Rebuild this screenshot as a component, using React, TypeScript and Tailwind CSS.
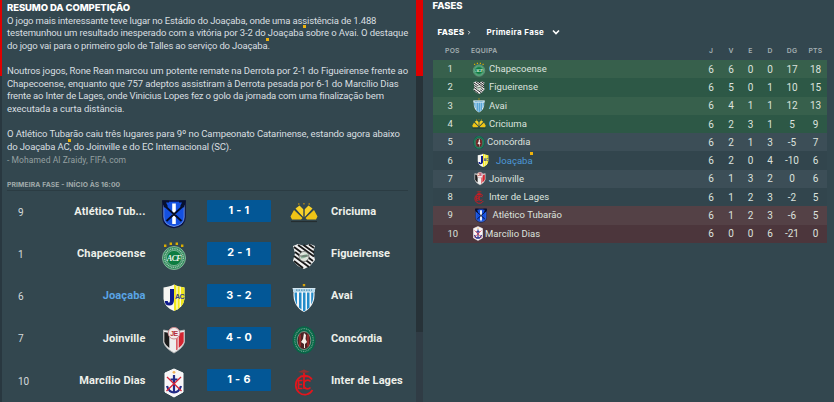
import type { ReactNode } from 'react';
import clsx from 'clsx';

type TeamId =
  | 'tubarao'
  | 'chapecoense'
  | 'joacaba'
  | 'joinville'
  | 'marcilio'
  | 'criciuma'
  | 'figueirense'
  | 'avai'
  | 'concordia'
  | 'inter';

const crests: Record<TeamId, ReactNode> = {
  tubarao: (
    <>
      <path d="M3 2h22v16q0 9-11 10.500Q3 27 3 18z" fill="#1450e0" stroke="#0a1245" strokeWidth="1.600" />
      <path d="M3.800 6v12q0 8 10.200 9.500Q24.200 26 24.200 18V6" fill="none" stroke="#8aaeef" strokeWidth="0.700" />
      <path d="M12.200 4.500h3.600V25h-3.600z" fill="#fff" />
      <path d="M5.500 7.500l16 14.500M22.500 7.500L6.500 22" stroke="#050b25" strokeWidth="1.800" />
      <path d="M2 1.500h7v2H6l2 4-4 1zM26 1.500h-7v2h3l-2 4 4 1z" fill="#07102f" />
    </>
  ),
  chapecoense: (
    <>
      <circle cx="14" cy="17" r="11.500" fill="#2f8a5b" stroke="#8dbba2" strokeWidth="0.900" />
      <circle cx="14" cy="17" r="9.300" fill="none" stroke="#a3c9b4" strokeWidth="1.500" strokeDasharray="1 0.800" />
      <circle cx="14" cy="17" r="7.600" fill="#0c7c40" stroke="#c3dccd" strokeWidth="0.500" />
      <text
        x="14"
        y="20"
        textAnchor="middle"
        fontSize="7.800"
        fontWeight="700"
        fontStyle="italic"
        letterSpacing="-0.600"
        fill="#f1f8f3"
        className="font-['Liberation_Serif',serif]"
      >
        ACF
      </text>
      <path d="M4 3.500h2.400v2.400H4zM9.600 1.500H12v2.400H9.600zM15.600 1.500H18v2.400h-2.400zM21 3.500h2.400v2.400H21z" fill="#dcae00" />
    </>
  ),
  joacaba: (
    <>
      <path d="M3.500 4.500q3-.5 5-1 3-.5 5.500-2 2.500 1.500 5.500 2 2 .5 5 1V16q-1 8.500-10.500 12Q4.500 24.500 3.500 16z" fill="#f6f6f2" />
      <path d="M14 1.500q2.500 1.500 5.500 2 2 .5 5 1V16q-1 8.500-10.500 12z" fill="#f0e61c" />
      <path d="M17 3v23.500M20.300 4v20" stroke="#fbfad8" strokeWidth="1.300" />
      <path d="M10 6h4v11q0 5.500-4.800 5.500-4.200 0-4.400-4.500h3q0 1.800 1.200 1.800 1 0 1-2.800z" fill="#0d1a8c" />
      <text
        x="19.500"
        y="16"
        textAnchor="middle"
        fontSize="7"
        fontWeight="700"
        letterSpacing="-0.500"
        fill="#33408f"
        className="font-['Liberation_Sans',sans-serif]"
      >
        AC
      </text>
    </>
  ),
  joinville: (
    <>
      <path d="M3.500 5l5 1 5.500-2 5.500 2 5-1v12q-1.500 6-10.500 11Q5 23 3.500 17z" fill="#eee" stroke="#b9b9b9" strokeWidth="0.900" />
      <path d="M4.300 7l5 1v15q-4-3-5-6z" fill="#1c1c1c" />
      <path d="M23.700 7l-5 1v15q4-3 5-6zM16.300 13h1.200v11.500l-1.200.8z" fill="#d32430" />
      <circle cx="14" cy="8.200" r="5.800" fill="#f3eaea" stroke="#c98a8e" strokeWidth="1" />
      <text
        x="14"
        y="10.800"
        textAnchor="middle"
        fontSize="7"
        fontWeight="700"
        letterSpacing="-0.500"
        fill="#b4303a"
        className="font-['Liberation_Sans',sans-serif]"
      >
        JE
      </text>
    </>
  ),
  marcilio: (
    <>
      <path d="M14 1l9 4v19l-9 5-9-5V5z" fill="#f7f5f7" stroke="#fff" strokeWidth="1" />
      <circle cx="14" cy="4.300" r="1.400" fill="#f2b45a" />
      <path d="M14 7v18M10.500 11.500h7M7 18q2 6.500 7 6.500t7-6.500" fill="none" stroke="#222b87" strokeWidth="2.200" />
      <path d="M7 9l14.500 14M21 9L6.500 23" stroke="#d62538" strokeWidth="1.300" />
    </>
  ),
  criciuma: (
    <>
      <path d="M.5 17.500L4 11l8.500 8-1.500 1.500H2zM27.500 17.500L24 11l-8.500 8 1.500 1.500h9z" fill="#f0c416" />
      <path d="M5.500 9.500l4-3 4 4v8zM22.500 9.500l-4-3-4 4v8z" fill="#f8d22a" />
      <path d="M4.500 10l9 9M23.500 10l-9 9M14 10v10" stroke="#33474f" strokeWidth="0.900" />
      <path d="M8 4.200h1.500v1.500H8zM13.200 4h1.500v1.500h-1.500zM18.500 4.200H20v1.500h-1.500z" fill="#a8841e" />
      <path d="M1 22.500h26" stroke="#242d30" strokeWidth="1.200" />
    </>
  ),
  figueirense: (
    <>
      <path d="M3 5l5-2 6 2 6-2 5 2-2 6 2 8-5 6-6 3-6-3-5-5 2-8z" fill="#f1f1f1" />
      <path
        d="M4 6l19 14M8 4l16 11.500M13.500 4L24 11.500M19 3.500l5 3.500M5 11l16 12M4 15l15 11M4 20l9 7"
        stroke="#191919"
        strokeWidth="1.900"
      />
      <circle cx="14" cy="15.500" r="5" fill="#dfe5dd" stroke="#555" strokeWidth="0.700" />
      <path d="M10 17.500q3-5 8-4-1 4-8 4z" fill="#8db39a" />
      <path d="M9.500 15h9" stroke="#454545" strokeWidth="0.800" />
    </>
  ),
  avai: (
    <>
      <path d="M2.500 5h23l-1 4q1 14-10.500 20Q2.500 23 3.500 9z" fill="#f3f7fa" />
      <path d="M3 5.500h22v3.500H3z" fill="#b7d9eb" />
      <path
        d="M4.500 9.500H7V22q-2.500-4-2.500-12.500zM9 9.500h2.500v17L9 24.500zM13 9.500h2.500v18L14 28.300l-1-.5zM17 9.500h2.500v15L17 26.500zM21.200 9.500h2.300q0 8-2.300 12z"
        fill="#248bc9"
      />
      <path d="M6 7.200h16" stroke="#4e91b5" strokeWidth="1.300" strokeDasharray="1.500 1" />
      <path d="M12.800 1h2.400v2.200h-2.400z" fill="#d6a20a" />
    </>
  ),
  concordia: (
    <>
      <ellipse cx="14" cy="15" rx="11.500" ry="13.700" fill="#086647" />
      <ellipse cx="14" cy="15" rx="9.200" ry="11.400" fill="none" stroke="#6fa68f" strokeWidth="1.200" strokeDasharray="1 0.800" />
      <ellipse cx="14" cy="15.500" rx="6.800" ry="9" fill="#4b2425" stroke="#bac3ba" strokeWidth="0.600" />
      <path d="M10 9.500v12M18 9.500v12" stroke="#a32d2d" strokeWidth="1.600" />
      <path d="M14 8l2 2-.5 4 1.500 3-2 2v4h-1v-4l-3-2 2-3z" fill="#f5f0e9" />
    </>
  ),
  inter: (
    <>
      <g fill="none" stroke="#e3151c" strokeWidth="1.700">
        <path d="M22 11.500A9 9.500 0 1 0 22.500 22" />
        <path d="M20.500 13.500a4 4.300 0 1 0 0 6" />
        <path d="M14 5v16M10 8.500h8M12.500 12.500H8.500v8h4M8.500 16.500h3.500" />
      </g>
      <path d="M8 4l6-2.500L20 4l-6 1z" fill="#8f302f" />
    </>
  ),
};

function Crest({ team, className }: { team: TeamId; className: string }) {
  return (
    <svg viewBox="0 0 28 30" className={clsx('shrink-0', className)}>
      {crests[team]}
    </svg>
  );
}

const report = [
  {
    text: 'O jogo mais interessante teve lugar no Estádio do Joaçaba, onde uma assistência de 1.488',
    tracking: 'tracking-[-0.16px]',
  },
  {
    text: 'testemunhou um resultado inesperado com a vitória por 3-2 do Joaçaba sobre o Avai. O destaque',
    tracking: 'tracking-[-0.11px]',
  },
  { text: 'do jogo vai para o primeiro golo de Talles ao serviço do Joaçaba.', tracking: 'tracking-[-0.16px]' },
  { text: '', tracking: '' },
  {
    text: 'Noutros jogos, Rone Rean marcou um potente remate na Derrota por 2-1 do Figueirense frente ao',
    tracking: 'tracking-[-0.09px]',
  },
  {
    text: 'Chapecoense, enquanto que 757 adeptos assistiram à Derrota pesada por 6-1 do Marcílio Dias',
    tracking: 'tracking-[-0.07px]',
  },
  {
    text: 'frente ao Inter de Lages, onde Vinicius Lopes fez o golo da jornada com uma finalização bem',
    tracking: 'tracking-[-0.165px]',
  },
  { text: 'executada a curta distância.', tracking: 'tracking-[-0.05px]' },
  { text: '', tracking: '' },
  {
    text: 'O Atlético Tubarão caiu três lugares para 9º no Campeonato Catarinense, estando agora abaixo',
    tracking: 'tracking-[-0.09px]',
  },
  { text: 'do Joaçaba AC, do Joinville e do EC Internacional (SC).', tracking: 'tracking-[-0.13px]' },
];

type Match = { pos: number; home: string; homeId: TeamId; score: string; away: string; awayId: TeamId };

const matches: Match[] = [
  { pos: 9, home: 'Atlético Tub...', homeId: 'tubarao', score: '1 - 1', away: 'Criciuma', awayId: 'criciuma' },
  { pos: 1, home: 'Chapecoense', homeId: 'chapecoense', score: '2 - 1', away: 'Figueirense', awayId: 'figueirense' },
  { pos: 6, home: 'Joaçaba', homeId: 'joacaba', score: '3 - 2', away: 'Avai', awayId: 'avai' },
  { pos: 7, home: 'Joinville', homeId: 'joinville', score: '4 - 0', away: 'Concórdia', awayId: 'concordia' },
  { pos: 10, home: 'Marcílio Dias', homeId: 'marcilio', score: '1 - 6', away: 'Inter de Lages', awayId: 'inter' },
];

type Row = { team: string; id: TeamId; stats: number[]; bg: string; crest: string; gap: string };

const standings: Row[] = [
  { team: 'Chapecoense', id: 'chapecoense', stats: [6, 6, 0, 0, 17, 18], bg: 'bg-[#37604c]', crest: 'ml-[39.5px]', gap: 'ml-[3px]' },
  { team: 'Figueirense', id: 'figueirense', stats: [6, 5, 0, 1, 10, 15], bg: 'bg-[#2d5846]', crest: 'ml-[39.5px]', gap: 'ml-[3px]' },
  { team: 'Avai', id: 'avai', stats: [6, 4, 1, 1, 12, 13], bg: 'bg-[#37604c]', crest: 'ml-[39.5px]', gap: 'ml-[3px]' },
  { team: 'Criciuma', id: 'criciuma', stats: [6, 2, 3, 1, 5, 9], bg: 'bg-[#2d5846]', crest: 'ml-[39.5px]', gap: 'ml-[3px]' },
  { team: 'Concórdia', id: 'concordia', stats: [6, 2, 1, 3, -5, 7], bg: 'bg-[#3c4e57]', crest: 'ml-[39px]', gap: 'ml-[1.5px]' },
  { team: 'Joaçaba', id: 'joacaba', stats: [6, 2, 0, 4, -10, 6], bg: 'bg-[#32454d]', crest: 'ml-[43px]', gap: 'ml-[6.5px]' },
  { team: 'Joinville', id: 'joinville', stats: [6, 1, 3, 2, 0, 6], bg: 'bg-[#3c4e57]', crest: 'ml-[40px]', gap: 'ml-[2.5px]' },
  { team: 'Inter de Lages', id: 'inter', stats: [6, 1, 2, 3, -2, 5], bg: 'bg-[#32454d]', crest: 'ml-[39.5px]', gap: 'ml-[3px]' },
  { team: 'Atlético Tubarão', id: 'tubarao', stats: [6, 1, 2, 3, -6, 5], bg: 'bg-[#544146]', crest: 'ml-[41px]', gap: 'ml-[5px]' },
  { team: 'Marcílio Dias', id: 'marcilio', stats: [6, 0, 0, 6, -21, 0], bg: 'bg-[#4c363c]', crest: 'ml-[38px]', gap: 'ml-[0.5px]' },
];

function NewsDot({ className }: { className: string }) {
  return <span className={clsx('absolute size-[3px] bg-[#efb20b]', className)} />;
}

function MatchRow({ match }: { match: Match }) {
  return (
    <div className="flex h-[42.3px] items-center">
      <span className="w-[36px] shrink-0 pl-[11px] text-[10px] text-[#d5dbdc]">{match.pos}</span>
      <span
        className={clsx(
          'w-[102.5px] shrink-0 whitespace-nowrap text-right text-[11px] font-bold tracking-[0.13px]',
          match.homeId === 'joacaba' ? 'text-[#5aa5e6]' : 'text-[#eef0ea]',
        )}
      >
        {match.home}
      </span>
      <Crest team={match.homeId} className="ml-[14px] mt-[3px] h-[30px] w-[28px]" />
      <div className="mb-[2px] ml-[19.5px] flex h-[22.5px] w-[64px] shrink-0 items-center justify-center rounded-[1px] bg-[#035796] font-['Inter',sans-serif] text-[10.8px] font-bold tracking-[0.35px] text-white">
        {match.score}
      </div>
      <Crest team={match.awayId} className="ml-[19px] mt-[3px] h-[30px] w-[28px]" />
      <span className="ml-[13px] whitespace-nowrap text-[11px] font-bold tracking-[0.1px] text-[#eef0ea]">
        {match.away}
      </span>
    </div>
  );
}

function Summary() {
  return (
    <section className="relative h-full w-[414px] shrink-0 pl-[5.5px]">
      <h2 className="h-[14px] pt-[2px] font-['Inter',sans-serif] text-[9.5px] leading-[12px] font-extrabold tracking-[-0.1px] text-white">
        RESUMO DA COMPETIÇÃO
      </h2>
      <div className="pt-[0.5px] text-[9.5px] leading-[12.67px] text-[#d9dfe0]">
        {report.map((line, i) => (
          <p key={i} className="h-[12.67px] whitespace-nowrap">
            <span className={line.tracking}>{line.text}</span>
          </p>
        ))}
        <p className="text-[8.5px] tracking-[0.08px] text-[#95a0a1]">- Mohamed Al Zraidy, FIFA.com</p>
      </div>
      <NewsDot className="top-[25px] left-[301px]" />
      <NewsDot className="top-[38px] left-[264.5px]" />
      <NewsDot className="top-[139px] left-[66.5px]" />
      <h3 className="mt-[13.5px] mr-[8px] h-[11px] border-b border-[#2b3c43] pt-[0.5px] font-['Inter',sans-serif] text-[6.8px] leading-[10px] font-bold tracking-[0.1px] text-[#a1abab]">
        PRIMEIRA FASE - INÍCIO ÀS 16:00
      </h3>
      {matches.map((match) => (
        <MatchRow key={match.pos} match={match} />
      ))}
    </section>
  );
}

const columnWidths = ['w-[20px]', 'w-[20px]', 'w-[19px]', 'w-[20px]', 'w-[24px]', 'w-[23px]'];
const columnNames = ['J', 'V', 'E', 'D', 'DG', 'PTS'];

function Standings() {
  return (
    <section className="grow pr-[7px] pl-[10px]">
      <h2 className="h-[22px] font-['Inter',sans-serif] text-[9.5px] leading-[11px] font-extrabold tracking-[0px] text-white">
        FASES
      </h2>
      <div className="flex h-[20px] items-center pl-[5px] font-['Inter',sans-serif] text-[8px] font-bold text-white">
        <span className="w-[27px] font-extrabold tracking-[0.3px]">FASES</span>
        <svg viewBox="0 0 4 6" className="ml-[2px] h-[5px] w-[4px]" fill="none" stroke="#fff">
          <path d="M1 1l2 2-2 2" />
        </svg>
        <span className="ml-[16px] w-[58px] whitespace-nowrap tracking-[0.35px]">Primeira Fase</span>
        <svg viewBox="0 0 8 6" className="ml-[7.5px] h-[6px] w-[8px]" fill="none" stroke="#fff" strokeWidth="1.6">
          <path d="M1 1.500l3 3 3-3" />
        </svg>
      </div>
      <div className="flex h-[18px] items-center pt-[1px] font-['Inter',sans-serif] text-[6.8px] font-semibold tracking-[0.25px] text-[#a4afb2]">
        <span className="w-[38.5px] pl-[12.5px]">POS</span>
        <span className="grow">EQUIPA</span>
        {columnNames.map((name, i) => (
          <span key={name} className={clsx('shrink-0 text-center', columnWidths[i])}>
            {name}
          </span>
        ))}
      </div>
      {standings.map((row, i) => (
        <div key={row.id} className={clsx('relative flex h-[18.3px] items-center text-[9.5px] text-[#dce2de]', row.bg)}>
          <span className="-mr-[34px] w-[34px] shrink-0 pl-[15px]">{i + 1}</span>
          <Crest team={row.id} className={clsx('h-[17px] w-[14px]', row.crest)} />
          <span
            className={clsx(
              'grow whitespace-nowrap tracking-[0.02px]',
              row.gap,
              row.id === 'joacaba' && 'text-[#4c98d8]',
            )}
          >
            {row.team}
          </span>
          {row.id === 'joacaba' && <NewsDot className="top-[1px] left-[97px]" />}
          {row.stats.map((value, col) => (
            <span key={col} className={clsx('shrink-0 text-center text-[10px]', columnWidths[col])}>
              {value}
            </span>
          ))}
        </div>
      ))}
    </section>
  );
}

export default function App() {
  return (
    <div className="flex h-[402px] w-[834px] overflow-hidden bg-[#33474f] font-['Roboto',sans-serif]">
      <div className="flex w-[1.5px] shrink-0 flex-col bg-[#293840]">
        <div className="h-[76px] bg-[#e00000]" />
      </div>
      <Summary />
      <div className="flex w-[7px] shrink-0 flex-col bg-[#303c45]">
        <div className="h-[76px] bg-[#e00000]" />
        <div className="h-[256px] bg-[#273238]" />
      </div>
      <Standings />
    </div>
  );
}
